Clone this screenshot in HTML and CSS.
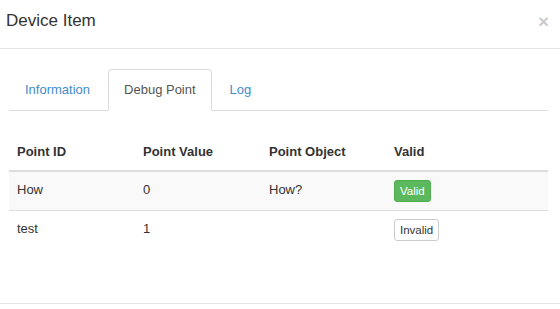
FILE: index.html
```html
<!DOCTYPE html>
<html lang="en">
<head>
    <meta charset="UTF-8">
    <meta name="viewport" content="width=device-width, initial-scale=1.0">
    <title>Device Item</title>
    <link rel="stylesheet" href="styles.css">
</head>
<body>
    <div class="modal">
        <div class="modal-header">
            <h4 class="modal-title">Device Item</h4>
            <button class="close" type="button">&times;</button>
        </div>

        <div class="modal-body">
            <ul class="nav-tabs">
                <li><a href="#">Information</a></li>
                <li class="active"><a href="#">Debug Point</a></li>
                <li><a href="#">Log</a></li>
            </ul>

            <table class="table">
                <thead>
                    <tr>
                        <th class="col-id">Point ID</th>
                        <th class="col-value">Point Value</th>
                        <th class="col-object">Point Object</th>
                        <th>Valid</th>
                    </tr>
                </thead>
                <tbody>
                    <tr class="striped">
                        <td>How</td>
                        <td>0</td>
                        <td>How?</td>
                        <td><span class="btn btn-success">Valid</span></td>
                    </tr>
                    <tr>
                        <td>test</td>
                        <td>1</td>
                        <td></td>
                        <td><span class="btn btn-default">Invalid</span></td>
                    </tr>
                </tbody>
            </table>
        </div>

        <div class="modal-footer"></div>
    </div>
</body>
</html>
```

FILE: styles.css
```css
* {
    box-sizing: border-box;
}

body {
    margin: 0;
    background-color: #fff;
    color: #333;
    font-family: "Liberation Sans", Arial, sans-serif;
    font-size: 13px;
    line-height: 20px;
}

.modal {
    width: 560px;
    height: 309px;
    overflow: hidden;
}

.modal-header {
    display: flex;
    justify-content: space-between;
    align-items: flex-start;
    height: 49px;
    padding: 8px 11px 0 6px;
    border-bottom: 1px solid #e5e5e5;
}

.modal-title {
    margin: 0;
    font-size: 17px;
    font-weight: normal;
    line-height: 26px;
}

.close {
    padding: 0;
    margin-top: 3px;
    border: none;
    background: none;
    color: #000;
    opacity: 0.2;
    font-family: "Liberation Sans", Arial, sans-serif;
    font-size: 19px;
    font-weight: bold;
    line-height: 21px;
    cursor: pointer;
}

.modal-body {
    height: 254px;
    padding: 20px 12px 0 9px;
}

.nav-tabs {
    display: flex;
    margin: 0;
    padding: 0;
    list-style: none;
    border-bottom: 1px solid #ddd;
}

.nav-tabs li {
    margin-right: 2px;
    margin-bottom: -1px;
}

.nav-tabs a {
    display: block;
    padding: 10px 15px;
    border: 1px solid transparent;
    border-radius: 4px 4px 0 0;
    color: #428bca;
    text-decoration: none;
}

.nav-tabs .active a {
    color: #555;
    background-color: #fff;
    border-color: #ddd #ddd transparent;
}

.table {
    width: 100%;
    margin-top: 23px;
    border-collapse: collapse;
    border-spacing: 0;
}

.table th,
.table td {
    padding: 8px;
    text-align: left;
    vertical-align: top;
    line-height: 20px;
}

.table th {
    font-weight: bold;
    border-bottom: 2px solid #ddd;
}

.table td {
    border-top: 1px solid #ddd;
}

.col-id,
.col-value {
    width: 126px;
}

.col-object {
    width: 125px;
}

.striped td {
    background-color: #f9f9f9;
}

.btn {
    display: inline-block;
    padding: 0 5px;
    border: 1px solid transparent;
    border-radius: 3px;
    font-size: 11.5px;
    line-height: 20px;
    vertical-align: middle;
}

.btn-success {
    color: #fff;
    background-color: #5cb85c;
    border-color: #4cae4c;
}

.btn-default {
    color: #333;
    background-color: #fff;
    border-color: #ccc;
}

.modal-footer {
    border-top: 1px solid #e5e5e5;
    height: 6px;
}
```
